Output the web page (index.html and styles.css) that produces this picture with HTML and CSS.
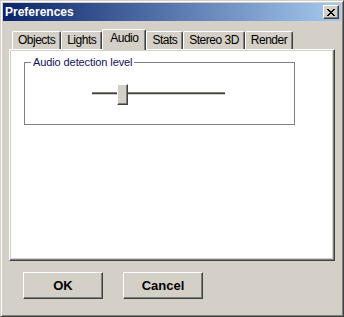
FILE: index.html
```html
<!DOCTYPE html>
<html>
<head>
    <title>Preferences</title>
    <link rel="stylesheet" href="styles.css">
</head>
<body>
    <div class="window">
        <div class="titlebar">
            <span class="title">Preferences</span>
            <button class="close" aria-label="Close">
                <svg width="8" height="7" viewBox="0 0 8 7" shape-rendering="crispEdges">
                    <path fill="#000" d="M0 0h2v1H0zM6 0h2v1H6zM1 1h2v1H1zM5 1h2v1H5zM2 2h4v1H2zM3 3h2v1H3zM2 4h4v1H2zM1 5h2v1H1zM5 5h2v1H5zM0 6h2v1H0zM6 6h2v1H6z"/>
                </svg>
            </button>
        </div>
        <div class="content">
            <div class="tabs">
                <div class="tab">Objects</div>
                <div class="tab">Lights</div>
                <div class="tab active">Audio</div>
                <div class="tab">Stats</div>
                <div class="tab">Stereo 3D</div>
                <div class="tab">Render</div>
            </div>
            <div class="panel">
                <fieldset class="group">
                    <legend>Audio detection level</legend>
                    <div class="slider">
                        <div class="track track-left"></div>
                        <div class="thumb"></div>
                        <div class="track track-right"></div>
                    </div>
                </fieldset>
            </div>
            <div class="buttons">
                <button class="btn">OK</button>
                <button class="btn">Cancel</button>
            </div>
        </div>
    </div>
</body>
</html>
```

FILE: styles.css
```css
body {
    margin: 0;
    font-family: "Liberation Sans", Arial, sans-serif;
    font-size: 11px;
    color: #000;
}

.window {
    width: 344px;
    height: 317px;
    box-sizing: border-box;
    background: #d4d0c8;
    border: 1px solid;
    border-color: #d4d0c8 #404040 #404040 #d4d0c8;
    box-shadow: inset 1px 1px #fff, inset -1px -1px #808080;
    padding: 2px;
}

.titlebar {
    height: 18px;
    display: flex;
    align-items: center;
    justify-content: space-between;
    padding: 0 2px;
    background: linear-gradient(to right, #0a246a, #a6caf0);
}

.title {
    color: #fff;
    font-weight: bold;
    font-size: 12px;
    line-height: 18px;
}

.close {
    width: 16px;
    height: 14px;
    box-sizing: border-box;
    padding: 0;
    display: flex;
    align-items: center;
    justify-content: center;
    background: #d4d0c8;
    border: 1px solid;
    border-color: #fff #404040 #404040 #fff;
    box-shadow: inset -1px -1px #808080;
}

.content {
    padding: 8px 6px 0;
}

.tabs {
    display: flex;
    align-items: flex-end;
    height: 20px;
    padding-left: 3px;
}

.tab {
    height: 18px;
    box-sizing: border-box;
    padding: 0 5px;
    font-size: 12px;
    letter-spacing: -0.5px;
    line-height: 16px;
    border: 1px solid;
    border-bottom: none;
    border-color: #fff #404040 #fff #fff;
    border-radius: 2px 2px 0 0;
    box-shadow: inset -1px 0 #808080;
    background: #d4d0c8;
}

.tab.active {
    height: 21px;
    margin-bottom: -1px;
    padding: 0 7px;
    position: relative;
    z-index: 1;
}

.panel {
    height: 212px;
    box-sizing: border-box;
    background: #fff;
    border: 1px solid;
    border-color: #fff #404040 #404040 #fff;
    box-shadow: inset -1px -1px #808080, inset -2px -2px #d4d0c8, inset 1px 1px #d4d0c8;
    padding-top: 6px;
}

.group {
    width: 271px;
    box-sizing: border-box;
    margin: 0 0 0 14px;
    padding: 0 0 19px 0;
    border: 1px solid #808080;
}

.group legend {
    margin-left: 6px;
    padding: 0 2px;
    line-height: 13px;
    letter-spacing: -0.1px;
    color: #10105a;
}

.slider {
    display: flex;
    align-items: flex-start;
    margin: 15px 0 0 67px;
    width: 133px;
    height: 21px;
}

.track {
    height: 1px;
    margin-top: 8px;
    background: #404040;
    border-top: 1px solid #808080;
    border-bottom: 1px solid #d4d0c8;
}

.track-left {
    width: 25px;
}

.track-right {
    flex: 1;
}

.thumb {
    width: 11px;
    height: 21px;
    box-sizing: border-box;
    background: #d4d0c8;
    border: 1px solid;
    border-color: #fff #404040 #404040 #fff;
    box-shadow: inset -1px -1px #808080;
}

.buttons {
    display: flex;
    gap: 20px;
    padding-left: 14px;
    margin-top: 11px;
}

.btn {
    width: 80px;
    height: 27px;
    box-sizing: border-box;
    padding: 0;
    font-family: "Liberation Sans", Arial, sans-serif;
    font-size: 13px;
    font-weight: bold;
    color: #000;
    background: #d4d0c8;
    border: 1px solid;
    border-color: #fff #404040 #404040 #fff;
    box-shadow: inset -1px -1px #808080;
}
```
